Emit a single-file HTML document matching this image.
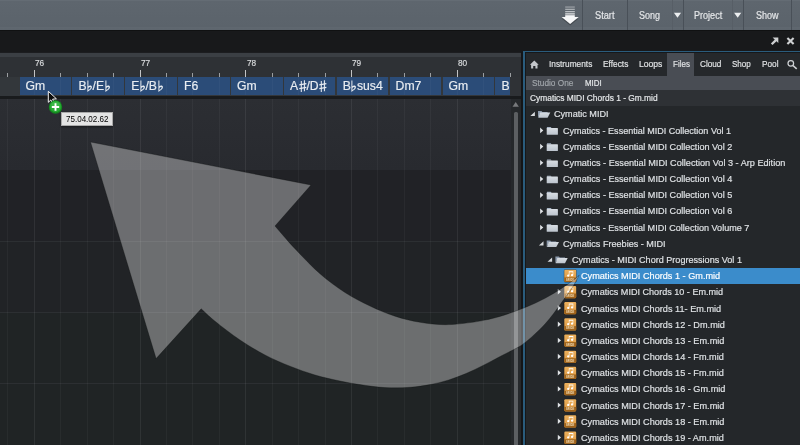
<!DOCTYPE html>
<html>
<head>
<meta charset="utf-8">
<style>
*{margin:0;padding:0;box-sizing:border-box}
html,body{width:800px;height:445px;overflow:hidden;background:#1f2224;font-family:"Liberation Sans",sans-serif;}
#root{position:absolute;left:0;top:0;width:800px;height:445px;overflow:hidden;background:#1f2224;will-change:transform}
.a{position:absolute}
.t{position:absolute;white-space:nowrap;color:#e4e6e8;transform-origin:0 50%;-webkit-text-stroke:0.18px currentColor}
svg{position:absolute;overflow:visible}
svg.g{position:relative;display:inline-block;vertical-align:-2px}
</style>
</head>
<body>
<div id="root">
<div class="a" style="left:0px;top:0px;width:800px;height:31.5px;background:linear-gradient(#6a727a 0,#5e666e 1px,#5b636b 27px,#5f676f 27.5px,#5d656d 29.6px,#101112 30.4px,#101112 31.5px);"></div>
<div class="a" style="left:582.1px;top:0px;width:1px;height:30px;background:#495058;"></div>
<div class="a" style="left:627.1px;top:0px;width:1px;height:30px;background:#495058;"></div>
<div class="a" style="left:682.9px;top:0px;width:1px;height:30px;background:#495058;"></div>
<div class="a" style="left:743.3px;top:0px;width:1px;height:30px;background:#495058;"></div>
<div class="a" style="left:791.3px;top:0px;width:1px;height:30px;background:#495058;"></div>
<div class="a" style="left:671.6px;top:0px;width:1px;height:30px;background:#575e66;"></div>
<div class="a" style="left:732.4px;top:0px;width:1px;height:30px;background:#575e66;"></div>
<div class="t" style="left:594.9px;top:9.50px;font-size:10px;height:12.0px;line-height:12.0px;color:#e6e8ea;font-weight:normal;transform:scaleX(0.9234);">Start</div>
<div class="t" style="left:639px;top:9.50px;font-size:10px;height:12.0px;line-height:12.0px;color:#e6e8ea;font-weight:normal;transform:scaleX(0.8991);">Song</div>
<div class="t" style="left:693.8px;top:9.50px;font-size:10px;height:12.0px;line-height:12.0px;color:#e6e8ea;font-weight:normal;transform:scaleX(0.906);">Project</div>
<div class="t" style="left:755.7px;top:9.50px;font-size:10px;height:12.0px;line-height:12.0px;color:#e6e8ea;font-weight:normal;transform:scaleX(0.8994);">Show</div>
<svg style="left:0;top:0" width="800" height="31"><path d="M673.9 12.7h7.2l-3.6 5z M734.1 12.7h7.2l-3.6 5z" fill="#eceef0"/><path d="M561.6 18.6h17.1l-8.55 7z" fill="#000" opacity=".25"/><g fill="#f6f7f8"><path d="M561.6 17h17.1l-8.55 7z"/><rect x="565.2" y="6.4" width="9.6" height="1.3" opacity=".38"/><rect x="565.2" y="8.7" width="9.6" height="1.3" opacity=".5"/><rect x="565.2" y="11" width="9.6" height="1.3" opacity=".62"/><rect x="565.2" y="13.2" width="9.6" height="1.4" opacity=".8"/><rect x="565.2" y="15.2" width="9.6" height="2"/></g></svg>
<div class="a" style="left:0px;top:31px;width:800px;height:21px;background:#18191b;"></div>
<svg style="left:0;top:31px" width="800" height="21"><g stroke="#cfd1d3" fill="none"><path d="M771.7 13.3l4.2-4.2" stroke-width="2.3"/><path d="M787.4 6.9l6.2 6.2M793.6 6.9l-6.2 6.2" stroke-width="2.1"/></g><path d="M772.6 6.4h5.7v5.7z" fill="#cfd1d3"/></svg>
<div class="a" style="left:0px;top:52px;width:521px;height:1.2px;background:#1c1d20;"></div>
<div class="a" style="left:0px;top:53.2px;width:521px;height:3.8px;background:#3b3f44;"></div>
<div class="a" style="left:0px;top:57px;width:521px;height:20px;background:#2e3135;"></div>
<div class="t" style="left:35.1px;top:57.98px;font-size:8.7px;height:10.44px;line-height:10.44px;color:#d9dbdd;font-weight:normal;transform:scaleX(0.95);">76</div>
<div class="t" style="left:140.9px;top:57.98px;font-size:8.7px;height:10.44px;line-height:10.44px;color:#d9dbdd;font-weight:normal;transform:scaleX(0.95);">77</div>
<div class="t" style="left:246.6px;top:57.98px;font-size:8.7px;height:10.44px;line-height:10.44px;color:#d9dbdd;font-weight:normal;transform:scaleX(0.95);">78</div>
<div class="t" style="left:352.4px;top:57.98px;font-size:8.7px;height:10.44px;line-height:10.44px;color:#d9dbdd;font-weight:normal;transform:scaleX(0.95);">79</div>
<div class="t" style="left:458.1px;top:57.98px;font-size:8.7px;height:10.44px;line-height:10.44px;color:#d9dbdd;font-weight:normal;transform:scaleX(0.95);">80</div>
<div class="a" style="left:7.36px;top:73.2px;width:1px;height:3.6px;background:#9b9ea1;"></div>
<div class="a" style="left:33.8px;top:70.2px;width:1px;height:6.6px;background:#c2c4c6;"></div>
<div class="a" style="left:60.24px;top:73.2px;width:1px;height:3.6px;background:#9b9ea1;"></div>
<div class="a" style="left:86.67px;top:73.2px;width:1px;height:3.6px;background:#9b9ea1;"></div>
<div class="a" style="left:113.11px;top:73.2px;width:1px;height:3.6px;background:#9b9ea1;"></div>
<div class="a" style="left:139.55px;top:70.2px;width:1px;height:6.6px;background:#c2c4c6;"></div>
<div class="a" style="left:165.99px;top:73.2px;width:1px;height:3.6px;background:#9b9ea1;"></div>
<div class="a" style="left:192.43px;top:73.2px;width:1px;height:3.6px;background:#9b9ea1;"></div>
<div class="a" style="left:218.86px;top:73.2px;width:1px;height:3.6px;background:#9b9ea1;"></div>
<div class="a" style="left:245.3px;top:70.2px;width:1px;height:6.6px;background:#c2c4c6;"></div>
<div class="a" style="left:271.74px;top:73.2px;width:1px;height:3.6px;background:#9b9ea1;"></div>
<div class="a" style="left:298.18px;top:73.2px;width:1px;height:3.6px;background:#9b9ea1;"></div>
<div class="a" style="left:324.61px;top:73.2px;width:1px;height:3.6px;background:#9b9ea1;"></div>
<div class="a" style="left:351.05px;top:70.2px;width:1px;height:6.6px;background:#c2c4c6;"></div>
<div class="a" style="left:377.49px;top:73.2px;width:1px;height:3.6px;background:#9b9ea1;"></div>
<div class="a" style="left:403.93px;top:73.2px;width:1px;height:3.6px;background:#9b9ea1;"></div>
<div class="a" style="left:430.36px;top:73.2px;width:1px;height:3.6px;background:#9b9ea1;"></div>
<div class="a" style="left:456.8px;top:70.2px;width:1px;height:6.6px;background:#c2c4c6;"></div>
<div class="a" style="left:483.24px;top:73.2px;width:1px;height:3.6px;background:#9b9ea1;"></div>
<div class="a" style="left:509.68px;top:73.2px;width:1px;height:3.6px;background:#9b9ea1;"></div>
<div class="a" style="left:0px;top:77px;width:521px;height:19px;background:#33373b;"></div>
<div class="a" style="left:0px;top:96px;width:521px;height:349px;background:#1f2224;"></div>
<div class="a" style="left:0px;top:95.5px;width:521px;height:3.5px;background:#191b1d;"></div>
<div class="a" style="left:0px;top:98.8px;width:521px;height:71px;background:linear-gradient(#2c2e33,#282a2f);"></div>
<div class="a" style="left:0px;top:169.8px;width:521px;height:71.6px;background:#212226;"></div>
<div class="a" style="left:0px;top:241.4px;width:521px;height:71.3px;background:#212326;"></div>
<div class="a" style="left:0px;top:312.7px;width:521px;height:70.8px;background:#202425;"></div>
<div class="a" style="left:0px;top:383.5px;width:521px;height:61.5px;background:#202425;"></div>
<div class="a" style="left:0px;top:240.9px;width:510px;height:1px;background:#2c2f32;"></div>
<div class="a" style="left:0px;top:312.2px;width:510px;height:1px;background:#2c2f32;"></div>
<div class="a" style="left:0px;top:383.0px;width:510px;height:1px;background:#2c2f32;"></div>
<div class="a" style="left:7.36px;top:98.8px;width:1px;height:347px;background:rgba(255,255,255,0.04);"></div>
<div class="a" style="left:33.8px;top:98.8px;width:1px;height:347px;background:rgba(255,255,255,0.07);"></div>
<div class="a" style="left:60.24px;top:98.8px;width:1px;height:347px;background:rgba(255,255,255,0.04);"></div>
<div class="a" style="left:86.67px;top:98.8px;width:1px;height:347px;background:rgba(255,255,255,0.04);"></div>
<div class="a" style="left:113.11px;top:98.8px;width:1px;height:347px;background:rgba(255,255,255,0.04);"></div>
<div class="a" style="left:139.55px;top:98.8px;width:1px;height:347px;background:rgba(255,255,255,0.07);"></div>
<div class="a" style="left:165.99px;top:98.8px;width:1px;height:347px;background:rgba(255,255,255,0.04);"></div>
<div class="a" style="left:192.43px;top:98.8px;width:1px;height:347px;background:rgba(255,255,255,0.04);"></div>
<div class="a" style="left:218.86px;top:98.8px;width:1px;height:347px;background:rgba(255,255,255,0.04);"></div>
<div class="a" style="left:245.3px;top:98.8px;width:1px;height:347px;background:rgba(255,255,255,0.07);"></div>
<div class="a" style="left:271.74px;top:98.8px;width:1px;height:347px;background:rgba(255,255,255,0.04);"></div>
<div class="a" style="left:298.18px;top:98.8px;width:1px;height:347px;background:rgba(255,255,255,0.04);"></div>
<div class="a" style="left:324.61px;top:98.8px;width:1px;height:347px;background:rgba(255,255,255,0.04);"></div>
<div class="a" style="left:351.05px;top:98.8px;width:1px;height:347px;background:rgba(255,255,255,0.07);"></div>
<div class="a" style="left:377.49px;top:98.8px;width:1px;height:347px;background:rgba(255,255,255,0.04);"></div>
<div class="a" style="left:403.93px;top:98.8px;width:1px;height:347px;background:rgba(255,255,255,0.04);"></div>
<div class="a" style="left:430.36px;top:98.8px;width:1px;height:347px;background:rgba(255,255,255,0.04);"></div>
<div class="a" style="left:456.8px;top:98.8px;width:1px;height:347px;background:rgba(255,255,255,0.07);"></div>
<div class="a" style="left:483.24px;top:98.8px;width:1px;height:347px;background:rgba(255,255,255,0.04);"></div>
<div class="a" style="left:19.50px;top:76.9px;width:51.5px;height:18.3px;background:#2b4c78;overflow:hidden"><div class="t" style="left:6px;top:0;font-size:12.2px;line-height:18.6px;color:#e8ecf1">Gm</div></div>
<div class="a" style="left:72.38px;top:76.9px;width:51.5px;height:18.3px;background:#2b4c78;overflow:hidden"><div class="t" style="left:6px;top:0;font-size:12.2px;line-height:18.6px;color:#e8ecf1">B<svg class="g" width="5.1" height="12" viewBox="0 0 51 120" preserveAspectRatio="none" style="margin:0 0.4px 0 0.6px"><path fill-rule="evenodd" fill="#e8ecf1" d="M4 4H14V62C24 50 50 50 50 71C50 91 24 107 4 120ZM14 79V101C24 94 36 84 36 74C36 66 22 70 14 79Z"/></svg>/E<svg class="g" width="5.1" height="12" viewBox="0 0 51 120" preserveAspectRatio="none" style="margin:0 0.4px 0 0.6px"><path fill-rule="evenodd" fill="#e8ecf1" d="M4 4H14V62C24 50 50 50 50 71C50 91 24 107 4 120ZM14 79V101C24 94 36 84 36 74C36 66 22 70 14 79Z"/></svg></div></div>
<div class="a" style="left:125.25px;top:76.9px;width:51.5px;height:18.3px;background:#2b4c78;overflow:hidden"><div class="t" style="left:6px;top:0;font-size:12.2px;line-height:18.6px;color:#e8ecf1">E<svg class="g" width="5.1" height="12" viewBox="0 0 51 120" preserveAspectRatio="none" style="margin:0 0.4px 0 0.6px"><path fill-rule="evenodd" fill="#e8ecf1" d="M4 4H14V62C24 50 50 50 50 71C50 91 24 107 4 120ZM14 79V101C24 94 36 84 36 74C36 66 22 70 14 79Z"/></svg>/B<svg class="g" width="5.1" height="12" viewBox="0 0 51 120" preserveAspectRatio="none" style="margin:0 0.4px 0 0.6px"><path fill-rule="evenodd" fill="#e8ecf1" d="M4 4H14V62C24 50 50 50 50 71C50 91 24 107 4 120ZM14 79V101C24 94 36 84 36 74C36 66 22 70 14 79Z"/></svg></div></div>
<div class="a" style="left:178.12px;top:76.9px;width:51.5px;height:18.3px;background:#2b4c78;overflow:hidden"><div class="t" style="left:6px;top:0;font-size:12.2px;line-height:18.6px;color:#e8ecf1">F6</div></div>
<div class="a" style="left:231.00px;top:76.9px;width:51.5px;height:18.3px;background:#2b4c78;overflow:hidden"><div class="t" style="left:6px;top:0;font-size:12.2px;line-height:18.6px;color:#e8ecf1">Gm</div></div>
<div class="a" style="left:283.88px;top:76.9px;width:51.5px;height:18.3px;background:#2b4c78;overflow:hidden"><div class="t" style="left:6px;top:0;font-size:12.2px;line-height:18.6px;color:#e8ecf1">A<svg class="g" width="7.6" height="12" viewBox="0 0 7.6 12" style="margin:0 0.3px 0 0.5px"><g stroke="#e8ecf1" fill="none"><path d="M2.3 0.9V11.9M5.4 0.3V11.3" stroke-width="1.05"/><path d="M0.3 4.9L7.4 3.6M0.3 8.7L7.4 7.4" stroke-width="1.35"/></g></svg>/D<svg class="g" width="7.6" height="12" viewBox="0 0 7.6 12" style="margin:0 0.3px 0 0.5px"><g stroke="#e8ecf1" fill="none"><path d="M2.3 0.9V11.9M5.4 0.3V11.3" stroke-width="1.05"/><path d="M0.3 4.9L7.4 3.6M0.3 8.7L7.4 7.4" stroke-width="1.35"/></g></svg></div></div>
<div class="a" style="left:336.75px;top:76.9px;width:51.5px;height:18.3px;background:#2b4c78;overflow:hidden"><div class="t" style="left:6px;top:0;font-size:12.2px;line-height:18.6px;color:#e8ecf1">B<svg class="g" width="5.1" height="12" viewBox="0 0 51 120" preserveAspectRatio="none" style="margin:0 0.4px 0 0.6px"><path fill-rule="evenodd" fill="#e8ecf1" d="M4 4H14V62C24 50 50 50 50 71C50 91 24 107 4 120ZM14 79V101C24 94 36 84 36 74C36 66 22 70 14 79Z"/></svg>sus4</div></div>
<div class="a" style="left:389.62px;top:76.9px;width:51.5px;height:18.3px;background:#2b4c78;overflow:hidden"><div class="t" style="left:6px;top:0;font-size:12.2px;line-height:18.6px;color:#e8ecf1">Dm7</div></div>
<div class="a" style="left:442.50px;top:76.9px;width:51.5px;height:18.3px;background:#2b4c78;overflow:hidden"><div class="t" style="left:6px;top:0;font-size:12.2px;line-height:18.6px;color:#e8ecf1">Gm</div></div>
<div class="a" style="left:495.38px;top:76.9px;width:14.3px;height:18.3px;background:#2b4c78;overflow:hidden"><div class="t" style="left:6px;top:0;font-size:12.2px;line-height:18.6px;color:#e8ecf1">B</div></div>
<div class="a" style="left:33.8px;top:77px;width:1px;height:18.3px;background:rgba(255,255,255,0.03);"></div>
<div class="a" style="left:60.24px;top:77px;width:1px;height:18.3px;background:rgba(255,255,255,0.03);"></div>
<div class="a" style="left:86.67px;top:77px;width:1px;height:18.3px;background:rgba(255,255,255,0.03);"></div>
<div class="a" style="left:113.11px;top:77px;width:1px;height:18.3px;background:rgba(255,255,255,0.03);"></div>
<div class="a" style="left:139.55px;top:77px;width:1px;height:18.3px;background:rgba(255,255,255,0.03);"></div>
<div class="a" style="left:165.99px;top:77px;width:1px;height:18.3px;background:rgba(255,255,255,0.03);"></div>
<div class="a" style="left:192.43px;top:77px;width:1px;height:18.3px;background:rgba(255,255,255,0.03);"></div>
<div class="a" style="left:218.86px;top:77px;width:1px;height:18.3px;background:rgba(255,255,255,0.03);"></div>
<div class="a" style="left:245.3px;top:77px;width:1px;height:18.3px;background:rgba(255,255,255,0.03);"></div>
<div class="a" style="left:271.74px;top:77px;width:1px;height:18.3px;background:rgba(255,255,255,0.03);"></div>
<div class="a" style="left:298.18px;top:77px;width:1px;height:18.3px;background:rgba(255,255,255,0.03);"></div>
<div class="a" style="left:324.61px;top:77px;width:1px;height:18.3px;background:rgba(255,255,255,0.03);"></div>
<div class="a" style="left:351.05px;top:77px;width:1px;height:18.3px;background:rgba(255,255,255,0.03);"></div>
<div class="a" style="left:377.49px;top:77px;width:1px;height:18.3px;background:rgba(255,255,255,0.03);"></div>
<div class="a" style="left:403.93px;top:77px;width:1px;height:18.3px;background:rgba(255,255,255,0.03);"></div>
<div class="a" style="left:430.36px;top:77px;width:1px;height:18.3px;background:rgba(255,255,255,0.03);"></div>
<div class="a" style="left:456.8px;top:77px;width:1px;height:18.3px;background:rgba(255,255,255,0.03);"></div>
<div class="a" style="left:483.24px;top:77px;width:1px;height:18.3px;background:rgba(255,255,255,0.03);"></div>
<div class="a" style="left:509.8px;top:77px;width:11.2px;height:18.6px;background:#2f3236;"></div>
<div class="a" style="left:510.5px;top:99px;width:10.5px;height:346px;background:#25282b;"></div>
<svg style="left:0;top:0" width="800" height="445"><path d="M512.5 106.7h6.4l-3.2-4.7z" fill="#77797c"/></svg>
<div class="a" style="left:513.8px;top:112px;width:3.8px;height:333px;background:#5c5f62;border-radius:1.5px 1.5px 0 0"></div>
<div class="a" style="left:521px;top:52px;width:2px;height:393px;background:#141517;"></div>
<div class="a" style="left:522.5px;top:50.7px;width:277.5px;height:394.3px;background:#16181a;border-left:2.5px solid #2a5c7d;border-top:1.7px solid #2a5c7d"></div>
<div class="a" style="left:526px;top:53.4px;width:274px;height:392px;background:#24272a;"></div>
<div class="a" style="left:526px;top:53.4px;width:274px;height:22.5px;background:#25282b;"></div>
<div class="a" style="left:667px;top:53.4px;width:27.3px;height:22.6px;background:#494d54;"></div>
<div class="a" style="left:526px;top:75.9px;width:274px;height:14.4px;background:#494d54;"></div>
<div class="a" style="left:526px;top:90.3px;width:274px;height:15.8px;background:#2e3135;"></div>
<div class="t" style="left:548.6px;top:58.32px;font-size:9.8px;height:11.76px;line-height:11.76px;color:#e2e4e6;font-weight:normal;transform:scaleX(0.8457);">Instruments</div>
<div class="t" style="left:602.8px;top:58.32px;font-size:9.8px;height:11.76px;line-height:11.76px;color:#e2e4e6;font-weight:normal;transform:scaleX(0.8496);">Effects</div>
<div class="t" style="left:638.6px;top:58.32px;font-size:9.8px;height:11.76px;line-height:11.76px;color:#e2e4e6;font-weight:normal;transform:scaleX(0.8763);">Loops</div>
<div class="t" style="left:672.5px;top:58.32px;font-size:9.8px;height:11.76px;line-height:11.76px;color:#e2e4e6;font-weight:normal;transform:scaleX(0.8167);">Files</div>
<div class="t" style="left:699.8px;top:58.32px;font-size:9.8px;height:11.76px;line-height:11.76px;color:#e2e4e6;font-weight:normal;transform:scaleX(0.8357);">Cloud</div>
<div class="t" style="left:731.7px;top:58.32px;font-size:9.8px;height:11.76px;line-height:11.76px;color:#e2e4e6;font-weight:normal;transform:scaleX(0.8214);">Shop</div>
<div class="t" style="left:761.7px;top:58.32px;font-size:9.8px;height:11.76px;line-height:11.76px;color:#e2e4e6;font-weight:normal;transform:scaleX(0.8412);">Pool</div>
<div class="t" style="left:532.4px;top:77.46px;font-size:9.4px;height:11.28px;line-height:11.28px;color:#a0a5aa;font-weight:normal;transform:scaleX(0.8824);">Studio One</div>
<div class="t" style="left:584.7px;top:77.46px;font-size:9.4px;height:11.28px;line-height:11.28px;color:#e6e8ea;font-weight:normal;transform:scaleX(0.8467);">MIDI</div>
<div class="t" style="left:530.1px;top:92.98px;font-size:9.2px;height:11.04px;line-height:11.04px;color:#e8eaec;font-weight:normal;transform:scaleX(0.9124);">Cymatics MIDI Chords 1 - Gm.mid</div>
<svg style="left:0;top:0" width="800" height="445"><path d="M534.3 60.6l4.4 4.2h-1.2v3.8h-2.1v-2.6h-2.2v2.6h-2.1v-3.8h-1.2z" fill="#c4c7cb"/><circle cx="790.8" cy="63.3" r="2.8" fill="none" stroke="#cfd2d5" stroke-width="1.25"/><path d="M792.9 65.5l3.8 3.4" stroke="#cfd2d5" stroke-width="1.6"/></svg>
<div class="t" style="left:554.0px;top:108.37px;font-size:9.8px;height:11.76px;line-height:11.76px;color:#dfe2e5;font-weight:normal;transform:scaleX(0.928);">Cymatic MIDI</div>
<div class="t" style="left:562.8px;top:124.55px;font-size:9.8px;height:11.76px;line-height:11.76px;color:#dfe2e5;font-weight:normal;transform:scaleX(0.9207887850803442);">Cymatics - Essential MIDI Collection Vol 1</div>
<div class="t" style="left:562.8px;top:140.73px;font-size:9.8px;height:11.76px;line-height:11.76px;color:#dfe2e5;font-weight:normal;transform:scaleX(0.9280000000000002);">Cymatics - Essential MIDI Collection Vol 2</div>
<div class="t" style="left:562.8px;top:156.91px;font-size:9.8px;height:11.76px;line-height:11.76px;color:#dfe2e5;font-weight:normal;transform:scaleX(0.9322589457685002);">Cymatics - Essential MIDI Collection Vol 3 - Arp Edition</div>
<div class="t" style="left:562.8px;top:173.09px;font-size:9.8px;height:11.76px;line-height:11.76px;color:#dfe2e5;font-weight:normal;transform:scaleX(0.9280000000000002);">Cymatics - Essential MIDI Collection Vol 4</div>
<div class="t" style="left:562.8px;top:189.27px;font-size:9.8px;height:11.76px;line-height:11.76px;color:#dfe2e5;font-weight:normal;transform:scaleX(0.9280000000000002);">Cymatics - Essential MIDI Collection Vol 5</div>
<div class="t" style="left:562.8px;top:205.45px;font-size:9.8px;height:11.76px;line-height:11.76px;color:#dfe2e5;font-weight:normal;transform:scaleX(0.9280000000000002);">Cymatics - Essential MIDI Collection Vol 6</div>
<div class="t" style="left:562.8px;top:221.63px;font-size:9.8px;height:11.76px;line-height:11.76px;color:#dfe2e5;font-weight:normal;transform:scaleX(0.9249835660653477);">Cymatics - Essential MIDI Collection Volume 7</div>
<div class="t" style="left:562.8px;top:237.81px;font-size:9.8px;height:11.76px;line-height:11.76px;color:#dfe2e5;font-weight:normal;transform:scaleX(0.9279999999999999);">Cymatics Freebies - MIDI</div>
<div class="t" style="left:571.6px;top:253.99px;font-size:9.8px;height:11.76px;line-height:11.76px;color:#dfe2e5;font-weight:normal;transform:scaleX(0.9262313748108484);">Cymatics - MIDI Chord Progressions Vol 1</div>
<div class="a" style="left:526px;top:267.75px;width:274px;height:16.2px;background:#3b8ccb;"></div>
<div class="t" style="left:580.8px;top:270.17px;font-size:9.8px;height:11.76px;line-height:11.76px;color:#ffffff;font-weight:normal;transform:scaleX(0.9329829062048891);">Cymatics MIDI Chords 1 - Gm.mid</div>
<div class="t" style="left:580.8px;top:286.35px;font-size:9.8px;height:11.76px;line-height:11.76px;color:#dfe2e5;font-weight:normal;transform:scaleX(0.9260000710210144);">Cymatics MIDI Chords 10 - Em.mid</div>
<div class="t" style="left:580.8px;top:302.53px;font-size:9.8px;height:11.76px;line-height:11.76px;color:#dfe2e5;font-weight:normal;transform:scaleX(0.9339581232279718);">Cymatics MIDI Chords 11- Em.mid</div>
<div class="t" style="left:580.8px;top:318.71px;font-size:9.8px;height:11.76px;line-height:11.76px;color:#dfe2e5;font-weight:normal;transform:scaleX(0.9339999999999999);">Cymatics MIDI Chords 12 - Dm.mid</div>
<div class="t" style="left:580.8px;top:334.89px;font-size:9.8px;height:11.76px;line-height:11.76px;color:#dfe2e5;font-weight:normal;transform:scaleX(0.9340000000000002);">Cymatics MIDI Chords 13 - Em.mid</div>
<div class="t" style="left:580.8px;top:351.07px;font-size:9.8px;height:11.76px;line-height:11.76px;color:#dfe2e5;font-weight:normal;transform:scaleX(0.9339999999999999);">Cymatics MIDI Chords 14 - Fm.mid</div>
<div class="t" style="left:580.8px;top:367.25px;font-size:9.8px;height:11.76px;line-height:11.76px;color:#dfe2e5;font-weight:normal;transform:scaleX(0.9339999999999999);">Cymatics MIDI Chords 15 - Fm.mid</div>
<div class="t" style="left:580.8px;top:383.43px;font-size:9.8px;height:11.76px;line-height:11.76px;color:#dfe2e5;font-weight:normal;transform:scaleX(0.934);">Cymatics MIDI Chords 16 - Gm.mid</div>
<div class="t" style="left:580.8px;top:399.61px;font-size:9.8px;height:11.76px;line-height:11.76px;color:#dfe2e5;font-weight:normal;transform:scaleX(0.9340000000000002);">Cymatics MIDI Chords 17 - Em.mid</div>
<div class="t" style="left:580.8px;top:415.79px;font-size:9.8px;height:11.76px;line-height:11.76px;color:#dfe2e5;font-weight:normal;transform:scaleX(0.9340000000000002);">Cymatics MIDI Chords 18 - Em.mid</div>
<div class="t" style="left:580.8px;top:431.97px;font-size:9.8px;height:11.76px;line-height:11.76px;color:#dfe2e5;font-weight:normal;transform:scaleX(0.934);">Cymatics MIDI Chords 19 - Am.mid</div>
<svg style="left:0;top:0" width="800" height="445"><defs><linearGradient id="mg" x1="0" y1="0" x2="0" y2="1"><stop offset="0" stop-color="#ecb05c"/><stop offset="0.65" stop-color="#e09e49"/></linearGradient><linearGradient id="fg" x1="0" y1="0" x2="0" y2="1"><stop offset="0" stop-color="#d8dde3"/><stop offset="1" stop-color="#bcc4cd"/></linearGradient></defs><path d="M534.9 111.8v4.3h-4.6z" fill="#d6d9dc"/><path d="M538.0 111.0h3.5l0.9 1h5.2v1.4h-7.4l-2.2 4.3z" fill="#8e9cae"/><path d="M540.0 112.5h10.3l-2.7 5.2h-9.3z" fill="url(#fg)"/><path d="M540.1 127.6l3.2 2.8l-3.2 2.8z" fill="#dfe2e5"/><path d="M547.1 127.1h3.6l1 1.1h-5z" fill="#a5b3c4"/><rect x="546.7" y="128.0" width="11.2" height="6.7" rx="0.5" fill="url(#fg)"/><path d="M540.1 143.8l3.2 2.8l-3.2 2.8z" fill="#dfe2e5"/><path d="M547.1 143.3h3.6l1 1.1h-5z" fill="#a5b3c4"/><rect x="546.7" y="144.2" width="11.2" height="6.7" rx="0.5" fill="url(#fg)"/><path d="M540.1 160.0l3.2 2.8l-3.2 2.8z" fill="#dfe2e5"/><path d="M547.1 159.5h3.6l1 1.1h-5z" fill="#a5b3c4"/><rect x="546.7" y="160.4" width="11.2" height="6.7" rx="0.5" fill="url(#fg)"/><path d="M540.1 176.2l3.2 2.8l-3.2 2.8z" fill="#dfe2e5"/><path d="M547.1 175.7h3.6l1 1.1h-5z" fill="#a5b3c4"/><rect x="546.7" y="176.6" width="11.2" height="6.7" rx="0.5" fill="url(#fg)"/><path d="M540.1 192.3l3.2 2.8l-3.2 2.8z" fill="#dfe2e5"/><path d="M547.1 191.8h3.6l1 1.1h-5z" fill="#a5b3c4"/><rect x="546.7" y="192.8" width="11.2" height="6.7" rx="0.5" fill="url(#fg)"/><path d="M540.1 208.5l3.2 2.8l-3.2 2.8z" fill="#dfe2e5"/><path d="M547.1 208.0h3.6l1 1.1h-5z" fill="#a5b3c4"/><rect x="546.7" y="208.9" width="11.2" height="6.7" rx="0.5" fill="url(#fg)"/><path d="M540.1 224.7l3.2 2.8l-3.2 2.8z" fill="#dfe2e5"/><path d="M547.1 224.2h3.6l1 1.1h-5z" fill="#a5b3c4"/><rect x="546.7" y="225.1" width="11.2" height="6.7" rx="0.5" fill="url(#fg)"/><path d="M543.5 241.2v4.3h-4.6z" fill="#d6d9dc"/><path d="M546.7 240.4h3.5l0.9 1h5.2v1.4h-7.4l-2.2 4.3z" fill="#8e9cae"/><path d="M548.7 241.9h10.3l-2.7 5.2h-9.3z" fill="url(#fg)"/><path d="M552.1 257.4v4.3h-4.6z" fill="#d6d9dc"/><path d="M555.4 256.6h3.5l0.9 1h5.2v1.4h-7.4l-2.2 4.3z" fill="#8e9cae"/><path d="M557.4 258.1h10.3l-2.7 5.2h-9.3z" fill="url(#fg)"/><g transform="translate(564.3 269.75)"><rect x="-0.5" y="-0.4" width="12.9" height="13.1" rx="1.6" fill="#15181c" opacity=".55"/><rect x="0" y="0" width="11.9" height="12.2" rx="1.1" fill="url(#mg)"/><path d="M0 7.9h11.9v3.2a1.1 1.1 0 0 1 -1.1 1.1h-9.7a1.1 1.1 0 0 1 -1.1 -1.1z" fill="#9f6219"/><rect x="0" y="7.7" width="11.9" height="0.5" fill="#8d5614" opacity=".6"/><path d="M4.5 1.5h4.5v3.8a1.2 1.1 0 1 1 -0.65 -0.98v-1.9h-3.2v3.4a1.2 1.1 0 1 1 -0.65 -0.98z" fill="#fff"/><text x="5.95" y="11.05" font-family="Liberation Sans" font-weight="bold" font-size="3.1" fill="#f3ddb6" text-anchor="middle" textLength="8" lengthAdjust="spacingAndGlyphs">MIDI</text></g><path d="M557.8 289.1l3.2 2.7l-3.2 2.7z" fill="#dfe2e5"/><g transform="translate(564.3 285.93)"><rect x="-0.5" y="-0.4" width="12.9" height="13.1" rx="1.6" fill="#15181c" opacity=".55"/><rect x="0" y="0" width="11.9" height="12.2" rx="1.1" fill="url(#mg)"/><path d="M0 7.9h11.9v3.2a1.1 1.1 0 0 1 -1.1 1.1h-9.7a1.1 1.1 0 0 1 -1.1 -1.1z" fill="#9f6219"/><rect x="0" y="7.7" width="11.9" height="0.5" fill="#8d5614" opacity=".6"/><path d="M4.5 1.5h4.5v3.8a1.2 1.1 0 1 1 -0.65 -0.98v-1.9h-3.2v3.4a1.2 1.1 0 1 1 -0.65 -0.98z" fill="#fff"/><text x="5.95" y="11.05" font-family="Liberation Sans" font-weight="bold" font-size="3.1" fill="#f3ddb6" text-anchor="middle" textLength="8" lengthAdjust="spacingAndGlyphs">MIDI</text></g><path d="M557.8 305.3l3.2 2.7l-3.2 2.7z" fill="#dfe2e5"/><g transform="translate(564.3 302.11)"><rect x="-0.5" y="-0.4" width="12.9" height="13.1" rx="1.6" fill="#15181c" opacity=".55"/><rect x="0" y="0" width="11.9" height="12.2" rx="1.1" fill="url(#mg)"/><path d="M0 7.9h11.9v3.2a1.1 1.1 0 0 1 -1.1 1.1h-9.7a1.1 1.1 0 0 1 -1.1 -1.1z" fill="#9f6219"/><rect x="0" y="7.7" width="11.9" height="0.5" fill="#8d5614" opacity=".6"/><path d="M4.5 1.5h4.5v3.8a1.2 1.1 0 1 1 -0.65 -0.98v-1.9h-3.2v3.4a1.2 1.1 0 1 1 -0.65 -0.98z" fill="#fff"/><text x="5.95" y="11.05" font-family="Liberation Sans" font-weight="bold" font-size="3.1" fill="#f3ddb6" text-anchor="middle" textLength="8" lengthAdjust="spacingAndGlyphs">MIDI</text></g><path d="M557.8 321.5l3.2 2.7l-3.2 2.7z" fill="#dfe2e5"/><g transform="translate(564.3 318.29)"><rect x="-0.5" y="-0.4" width="12.9" height="13.1" rx="1.6" fill="#15181c" opacity=".55"/><rect x="0" y="0" width="11.9" height="12.2" rx="1.1" fill="url(#mg)"/><path d="M0 7.9h11.9v3.2a1.1 1.1 0 0 1 -1.1 1.1h-9.7a1.1 1.1 0 0 1 -1.1 -1.1z" fill="#9f6219"/><rect x="0" y="7.7" width="11.9" height="0.5" fill="#8d5614" opacity=".6"/><path d="M4.5 1.5h4.5v3.8a1.2 1.1 0 1 1 -0.65 -0.98v-1.9h-3.2v3.4a1.2 1.1 0 1 1 -0.65 -0.98z" fill="#fff"/><text x="5.95" y="11.05" font-family="Liberation Sans" font-weight="bold" font-size="3.1" fill="#f3ddb6" text-anchor="middle" textLength="8" lengthAdjust="spacingAndGlyphs">MIDI</text></g><path d="M557.8 337.7l3.2 2.7l-3.2 2.7z" fill="#dfe2e5"/><g transform="translate(564.3 334.47)"><rect x="-0.5" y="-0.4" width="12.9" height="13.1" rx="1.6" fill="#15181c" opacity=".55"/><rect x="0" y="0" width="11.9" height="12.2" rx="1.1" fill="url(#mg)"/><path d="M0 7.9h11.9v3.2a1.1 1.1 0 0 1 -1.1 1.1h-9.7a1.1 1.1 0 0 1 -1.1 -1.1z" fill="#9f6219"/><rect x="0" y="7.7" width="11.9" height="0.5" fill="#8d5614" opacity=".6"/><path d="M4.5 1.5h4.5v3.8a1.2 1.1 0 1 1 -0.65 -0.98v-1.9h-3.2v3.4a1.2 1.1 0 1 1 -0.65 -0.98z" fill="#fff"/><text x="5.95" y="11.05" font-family="Liberation Sans" font-weight="bold" font-size="3.1" fill="#f3ddb6" text-anchor="middle" textLength="8" lengthAdjust="spacingAndGlyphs">MIDI</text></g><path d="M557.8 353.8l3.2 2.7l-3.2 2.7z" fill="#dfe2e5"/><g transform="translate(564.3 350.65)"><rect x="-0.5" y="-0.4" width="12.9" height="13.1" rx="1.6" fill="#15181c" opacity=".55"/><rect x="0" y="0" width="11.9" height="12.2" rx="1.1" fill="url(#mg)"/><path d="M0 7.9h11.9v3.2a1.1 1.1 0 0 1 -1.1 1.1h-9.7a1.1 1.1 0 0 1 -1.1 -1.1z" fill="#9f6219"/><rect x="0" y="7.7" width="11.9" height="0.5" fill="#8d5614" opacity=".6"/><path d="M4.5 1.5h4.5v3.8a1.2 1.1 0 1 1 -0.65 -0.98v-1.9h-3.2v3.4a1.2 1.1 0 1 1 -0.65 -0.98z" fill="#fff"/><text x="5.95" y="11.05" font-family="Liberation Sans" font-weight="bold" font-size="3.1" fill="#f3ddb6" text-anchor="middle" textLength="8" lengthAdjust="spacingAndGlyphs">MIDI</text></g><path d="M557.8 370.0l3.2 2.7l-3.2 2.7z" fill="#dfe2e5"/><g transform="translate(564.3 366.83)"><rect x="-0.5" y="-0.4" width="12.9" height="13.1" rx="1.6" fill="#15181c" opacity=".55"/><rect x="0" y="0" width="11.9" height="12.2" rx="1.1" fill="url(#mg)"/><path d="M0 7.9h11.9v3.2a1.1 1.1 0 0 1 -1.1 1.1h-9.7a1.1 1.1 0 0 1 -1.1 -1.1z" fill="#9f6219"/><rect x="0" y="7.7" width="11.9" height="0.5" fill="#8d5614" opacity=".6"/><path d="M4.5 1.5h4.5v3.8a1.2 1.1 0 1 1 -0.65 -0.98v-1.9h-3.2v3.4a1.2 1.1 0 1 1 -0.65 -0.98z" fill="#fff"/><text x="5.95" y="11.05" font-family="Liberation Sans" font-weight="bold" font-size="3.1" fill="#f3ddb6" text-anchor="middle" textLength="8" lengthAdjust="spacingAndGlyphs">MIDI</text></g><path d="M557.8 386.2l3.2 2.7l-3.2 2.7z" fill="#dfe2e5"/><g transform="translate(564.3 383.01)"><rect x="-0.5" y="-0.4" width="12.9" height="13.1" rx="1.6" fill="#15181c" opacity=".55"/><rect x="0" y="0" width="11.9" height="12.2" rx="1.1" fill="url(#mg)"/><path d="M0 7.9h11.9v3.2a1.1 1.1 0 0 1 -1.1 1.1h-9.7a1.1 1.1 0 0 1 -1.1 -1.1z" fill="#9f6219"/><rect x="0" y="7.7" width="11.9" height="0.5" fill="#8d5614" opacity=".6"/><path d="M4.5 1.5h4.5v3.8a1.2 1.1 0 1 1 -0.65 -0.98v-1.9h-3.2v3.4a1.2 1.1 0 1 1 -0.65 -0.98z" fill="#fff"/><text x="5.95" y="11.05" font-family="Liberation Sans" font-weight="bold" font-size="3.1" fill="#f3ddb6" text-anchor="middle" textLength="8" lengthAdjust="spacingAndGlyphs">MIDI</text></g><path d="M557.8 402.4l3.2 2.7l-3.2 2.7z" fill="#dfe2e5"/><g transform="translate(564.3 399.19)"><rect x="-0.5" y="-0.4" width="12.9" height="13.1" rx="1.6" fill="#15181c" opacity=".55"/><rect x="0" y="0" width="11.9" height="12.2" rx="1.1" fill="url(#mg)"/><path d="M0 7.9h11.9v3.2a1.1 1.1 0 0 1 -1.1 1.1h-9.7a1.1 1.1 0 0 1 -1.1 -1.1z" fill="#9f6219"/><rect x="0" y="7.7" width="11.9" height="0.5" fill="#8d5614" opacity=".6"/><path d="M4.5 1.5h4.5v3.8a1.2 1.1 0 1 1 -0.65 -0.98v-1.9h-3.2v3.4a1.2 1.1 0 1 1 -0.65 -0.98z" fill="#fff"/><text x="5.95" y="11.05" font-family="Liberation Sans" font-weight="bold" font-size="3.1" fill="#f3ddb6" text-anchor="middle" textLength="8" lengthAdjust="spacingAndGlyphs">MIDI</text></g><path d="M557.8 418.6l3.2 2.7l-3.2 2.7z" fill="#dfe2e5"/><g transform="translate(564.3 415.37)"><rect x="-0.5" y="-0.4" width="12.9" height="13.1" rx="1.6" fill="#15181c" opacity=".55"/><rect x="0" y="0" width="11.9" height="12.2" rx="1.1" fill="url(#mg)"/><path d="M0 7.9h11.9v3.2a1.1 1.1 0 0 1 -1.1 1.1h-9.7a1.1 1.1 0 0 1 -1.1 -1.1z" fill="#9f6219"/><rect x="0" y="7.7" width="11.9" height="0.5" fill="#8d5614" opacity=".6"/><path d="M4.5 1.5h4.5v3.8a1.2 1.1 0 1 1 -0.65 -0.98v-1.9h-3.2v3.4a1.2 1.1 0 1 1 -0.65 -0.98z" fill="#fff"/><text x="5.95" y="11.05" font-family="Liberation Sans" font-weight="bold" font-size="3.1" fill="#f3ddb6" text-anchor="middle" textLength="8" lengthAdjust="spacingAndGlyphs">MIDI</text></g><path d="M557.8 434.8l3.2 2.7l-3.2 2.7z" fill="#dfe2e5"/><g transform="translate(564.3 431.55)"><rect x="-0.5" y="-0.4" width="12.9" height="13.1" rx="1.6" fill="#15181c" opacity=".55"/><rect x="0" y="0" width="11.9" height="12.2" rx="1.1" fill="url(#mg)"/><path d="M0 7.9h11.9v3.2a1.1 1.1 0 0 1 -1.1 1.1h-9.7a1.1 1.1 0 0 1 -1.1 -1.1z" fill="#9f6219"/><rect x="0" y="7.7" width="11.9" height="0.5" fill="#8d5614" opacity=".6"/><path d="M4.5 1.5h4.5v3.8a1.2 1.1 0 1 1 -0.65 -0.98v-1.9h-3.2v3.4a1.2 1.1 0 1 1 -0.65 -0.98z" fill="#fff"/><text x="5.95" y="11.05" font-family="Liberation Sans" font-weight="bold" font-size="3.1" fill="#f3ddb6" text-anchor="middle" textLength="8" lengthAdjust="spacingAndGlyphs">MIDI</text></g></svg>
<svg style="left:0;top:0" width="800" height="445"><path d="M90.5 142L311 185L275 226C278.3 229.8 287.5 240.8 295.0 248.8C302.5 256.7 311.7 266.5 320.0 273.8C328.3 281.0 336.7 287.1 345.0 292.5C353.3 297.9 361.7 302.0 370.0 306.0C378.3 310.0 386.7 313.5 395.0 316.2C403.3 319.0 411.7 320.9 420.0 322.3C428.3 323.7 436.7 324.6 445.0 324.7C453.3 324.8 463.3 323.4 470.0 322.6C476.7 321.8 480.0 321.1 485.0 320.1C490.0 319.1 494.5 318.0 500.0 316.4C505.5 314.8 512.0 312.5 518.0 310.2C524.0 307.9 530.0 305.6 536.0 302.8C542.0 300.0 548.0 296.8 554.0 293.2C560.0 289.6 567.8 284.2 572.0 281.2C576.2 278.2 578.0 276.2 579.2 275.2C578.0 277.3 574.7 283.8 572.0 288.0C569.3 292.2 566.0 296.3 563.0 300.5C560.0 304.7 557.0 309.1 554.0 313.0C551.0 316.9 548.0 320.7 545.0 324.0C542.0 327.3 539.0 330.2 536.0 333.0C533.0 335.8 530.0 338.6 527.0 341.0C524.0 343.4 522.2 344.9 518.0 347.3C513.8 349.7 507.7 352.6 502.0 355.5C496.3 358.4 490.0 362.0 484.0 365.0C478.0 368.0 472.0 371.0 466.0 373.5C460.0 376.0 454.0 378.4 448.0 380.2C442.0 382.1 436.3 383.4 430.0 384.6C423.7 385.8 417.5 386.8 410.0 387.3C402.5 387.8 393.3 388.1 385.0 387.6C376.7 387.2 367.5 385.7 360.0 384.6C352.5 383.5 347.5 382.6 340.0 381.0C332.5 379.4 323.3 377.5 315.0 375.0C306.7 372.5 298.3 369.6 290.0 366.2C281.7 362.9 273.3 359.4 265.0 355.0C256.7 350.6 248.3 345.6 240.0 340.0C231.7 334.4 221.5 326.5 215.0 321.2C208.5 316.0 203.5 310.8 201.2 308.8L156.1 358.6Z" fill="#ffffff" fill-opacity="0.34" stroke="#0b0c0e" stroke-opacity="0.45" stroke-width="0.7"/></svg>
<svg style="left:0;top:0" width="800" height="445"><path d="M48.3 91.3V102.3L50.9 99.9L52.7 103.7L54.3 102.9L52.6 99.2L56.4 98.8Z" fill="#0c0c0c" stroke="#fff" stroke-width="0.95" stroke-linejoin="round"/><circle cx="55.5" cy="107" r="6.7" fill="#14891f"/><circle cx="55.5" cy="106.5" r="5.7" fill="#27ab34"/><ellipse cx="55.5" cy="104.6" rx="4.2" ry="2.6" fill="#4cc458" opacity=".55"/><path d="M55.5 103.3v7.4M51.8 107h7.4" stroke="#fff" stroke-width="1.9"/></svg>
<div class="a" style="left:60.8px;top:112.1px;width:52px;height:13.8px;background:#e4e4e4;border:1px solid #a9a9a9;box-shadow:0 1px 2px rgba(0,0,0,.45)"></div>
<div class="t" style="left:65.8px;top:113.68px;font-size:8.7px;height:10.44px;line-height:10.44px;color:#000;font-weight:normal;transform:scaleX(0.9247);-webkit-text-stroke:0">75.04.02.62</div>
</div>
</body>
</html>
